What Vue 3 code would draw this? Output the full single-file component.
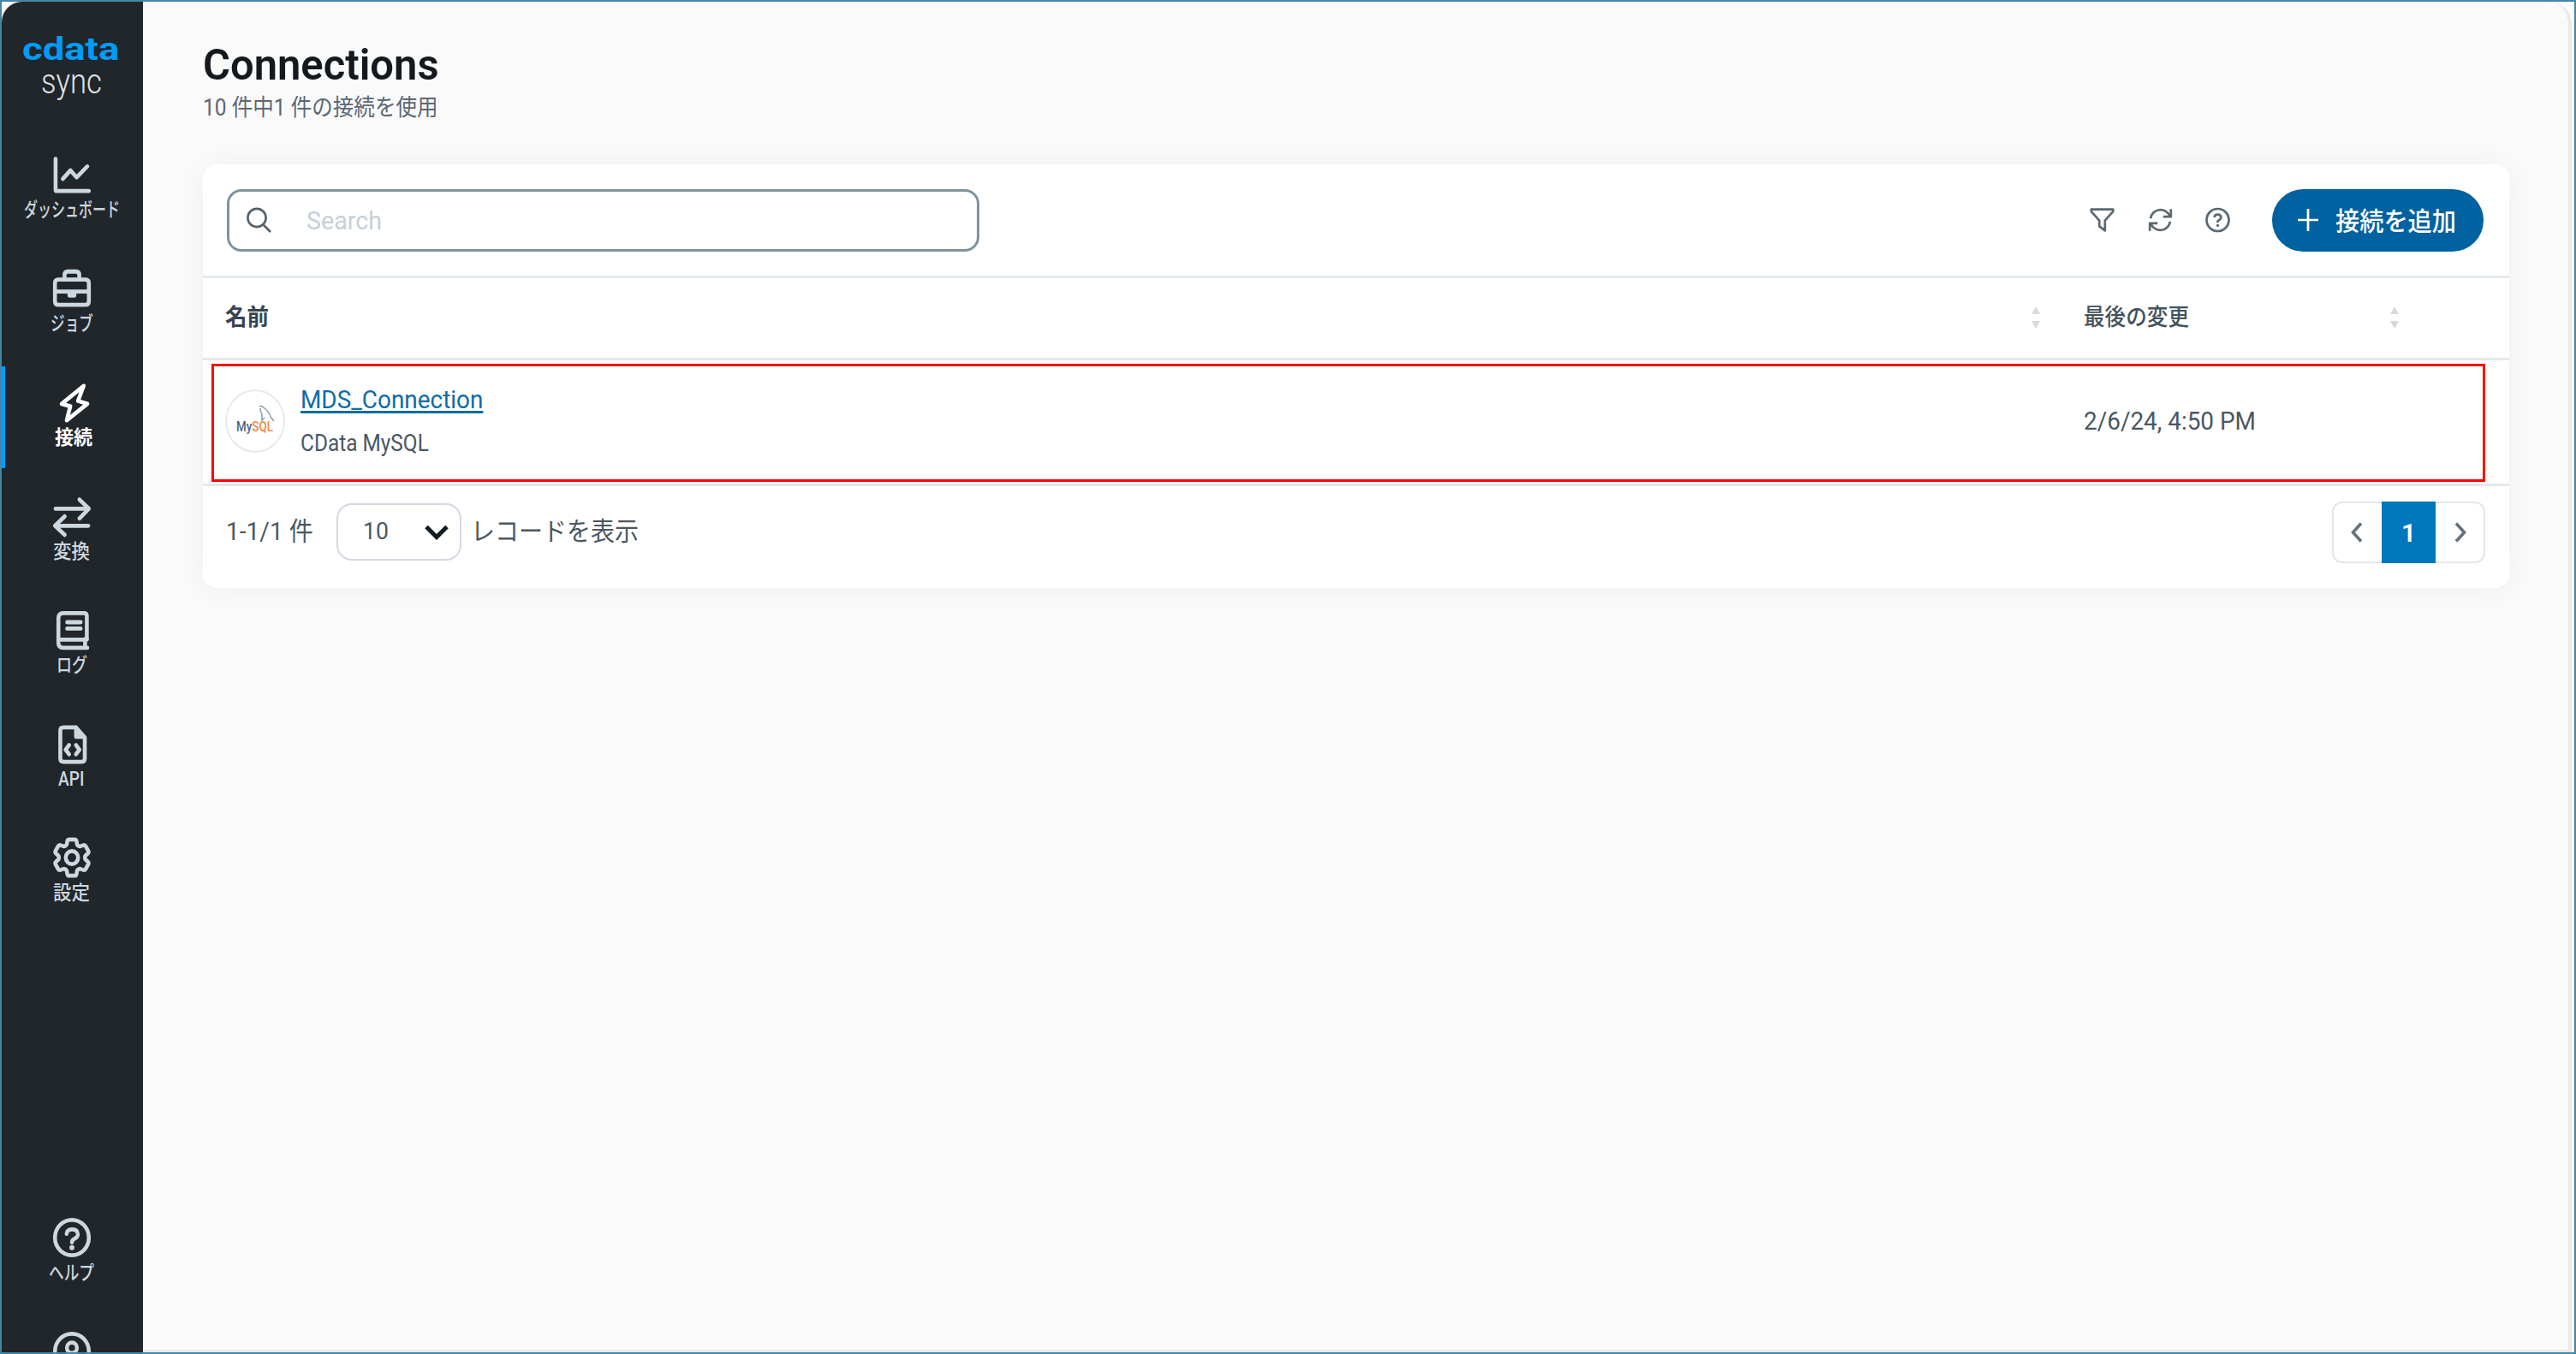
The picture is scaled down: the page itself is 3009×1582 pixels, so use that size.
<template>
  <div class="app">
    <aside class="sidebar">
      <div class="logo">
        <span v-fit="113" class="logo-name">cdata</span>
        <span v-fit="71" class="logo-product">sync</span>
      </div>
      <nav class="nav">
        <a
          v-for="item in mainItems"
          :key="item.label"
          class="nav-item"
          :class="{ 'active': item.active }"
        >
          <svg class="nav-icon" viewBox="0 0 24 24" preserveAspectRatio="none">
            <path v-for="d in item.strokes" :key="d" :d="d" :transform="item.transform" :stroke-width="item.strokeWidth || 2.5" />
            <path v-if="item.fill" class="solid" :d="item.fill" />
          </svg>
          <span v-fit="item.width" class="nav-label">{{ item.label }}</span>
        </a>
      </nav>
      <nav class="nav nav-bottom">
        <a v-for="item in bottomItems" :key="item.label" class="nav-item">
          <svg class="nav-icon" viewBox="0 0 24 24" preserveAspectRatio="none">
            <circle cx="12" cy="12" r="10.8" stroke-width="2.5" />
            <path v-for="d in item.strokes" :key="d" :d="d" stroke-width="2.4" />
            <circle v-if="item.dot" class="solid" cx="12" cy="18.1" r="1.6" />
          </svg>
          <span v-if="item.width" v-fit="item.width" class="nav-label">{{ item.label }}</span>
        </a>
      </nav>
    </aside>

    <main class="main">
      <h1 class="title"><span v-fit="276">Connections</span></h1>
      <p class="subtitle"><span v-fit="275">10 件中1 件の接続を使用</span></p>

      <section class="card">
        <div class="toolbar">
          <div class="search">
            <svg class="search-icon" viewBox="0 0 29 30">
              <circle cx="12" cy="12.5" r="10.6" />
              <path d="M19.5 20.5L28 29" />
            </svg>
            <span v-fit="88">Search</span>
          </div>
          <div class="actions">
            <svg class="action-icon" viewBox="0 0 29 30">
              <path d="M1.8 2.6H27.2V5.2L17.8 15.6V27.4L11.2 22.4V15.6L1.8 5.2Z" />
            </svg>
            <svg class="action-icon" viewBox="0 0 29 30">
              <path d="M3 13.2A11.8 11.8 0 0 1 25.4 10M26.8 2.2V11.2H17.8" />
              <path d="M26 16.8A11.8 11.8 0 0 1 3.6 20M2.2 27.8V18.8H11.2" />
            </svg>
            <svg class="action-icon" viewBox="0 0 29 30">
              <circle cx="14.5" cy="15" r="13" />
              <path d="M10.6 12Q10.8 8.6 14.5 8.6T18.4 12Q18.4 13.8 16.2 15T14.5 18" />
              <circle class="solid" cx="14.5" cy="21.4" r="1.7" />
            </svg>
          </div>
          <button class="add-button">
            <svg class="plus-icon" viewBox="0 0 24 26">
              <path d="M12 0V26M0 13H24" />
            </svg>
            <span v-fit="141">接続を追加</span>
          </button>
        </div>

        <div class="row head-row">
          <div class="cell">
            <span v-fit="51" class="name-head">名前</span>
            <svg class="sort-icon" viewBox="0 0 10 26"><path d="M5 0L10 9H0ZM5 26L0 17H10Z" /></svg>
          </div>
          <div class="cell">
            <span v-fit="123">最後の変更</span>
            <svg class="sort-icon" viewBox="0 0 10 26"><path d="M5 0L10 9H0ZM5 26L0 17H10Z" /></svg>
          </div>
        </div>

        <div v-for="connection in connections" :key="connection.name" class="row data-row">
          <div class="cell">
            <div class="avatar">
              <svg viewBox="0 0 70 74">
                <path d="M40 20Q42 18 46 22Q52 27 53 32L57 37M41 22Q41 26 43 29L43 36L46 33" />
                <text x="13" y="49" textLength="43" lengthAdjust="spacingAndGlyphs">My<tspan>SQL</tspan></text>
              </svg>
            </div>
            <div class="connection">
              <a v-fit="213" class="connection-name">{{ connection.name }}</a>
              <span v-fit="150" class="connection-type">{{ connection.type }}</span>
            </div>
          </div>
          <div class="cell">
            <span v-fit="201" class="modified">{{ connection.modified }}</span>
          </div>
          <div class="highlight"></div>
        </div>

        <div class="footer">
          <span v-fit="102" class="range">1-1/1 件</span>
          <div class="page-size">
            <span v-fit="30">10</span>
            <svg class="select-arrow" viewBox="0 0 28 18"><path d="M2 2.5L14 14.5L26 2.5" /></svg>
          </div>
          <span v-fit="196" class="records">レコードを表示</span>
          <div class="pagination">
            <button class="page-button">
              <svg viewBox="0 0 14 24"><path d="M12 1.5L2.5 12L12 22.5" /></svg>
            </button>
            <button class="page-button current">1</button>
            <button class="page-button">
              <svg viewBox="0 0 14 24"><path d="M2 1.5L11.5 12L2 22.5" /></svg>
            </button>
          </div>
        </div>
      </section>
    </main>
  </div>
</template>

<script setup>
import { ref } from 'vue';

// Condenses a label to the given width and keeps its layout box in step
const vFit = {
  mounted(el, { value }) {
    const natural = el.offsetWidth;
    el.style.transform = `scaleX(${value / natural})`;
    el.style.marginRight = `${value - natural}px`;
  }
};

const gear = 'M9.594 3.94c.09-.542.56-.94 1.11-.94h2.593c.55 0 1.02.398 1.11.94l.213 1.281c.063.374.313.686.645.87.074.04.147.083.22.127.325.196.72.257 1.075.124l1.217-.456a1.125 1.125 0 0 1 1.37.49l1.296 2.247a1.125 1.125 0 0 1-.26 1.431l-1.003.827c-.293.241-.438.613-.43.992a7.723 7.723 0 0 1 0 .255c-.008.378.137.75.43.991l1.004.827c.424.35.534.955.26 1.43l-1.298 2.247a1.125 1.125 0 0 1-1.369.491l-1.217-.456c-.355-.133-.75-.072-1.076.124a6.47 6.47 0 0 1-.22.128c-.331.183-.581.495-.644.869l-.213 1.281c-.09.543-.56.94-1.11.94h-2.594c-.55 0-1.019-.398-1.11-.94l-.213-1.281c-.062-.374-.312-.686-.644-.87a6.52 6.52 0 0 1-.22-.127c-.325-.196-.72-.257-1.076-.124l-1.217.456a1.125 1.125 0 0 1-1.369-.49l-1.297-2.247a1.125 1.125 0 0 1 .26-1.431l1.004-.827c.292-.24.437-.613.43-.991a6.932 6.932 0 0 1 0-.255c.007-.38-.138-.751-.43-.992l-1.004-.827a1.125 1.125 0 0 1-.26-1.43l1.297-2.247a1.125 1.125 0 0 1 1.37-.491l1.216.456c.356.133.751.072 1.076-.124.072-.044.146-.086.22-.128.332-.183.582-.495.644-.869l.214-1.28Z';

const mainItems = ref([
  {
    label: 'ダッシュボード',
    width: 112,
    strokes: ['M1.6 2.4V21.2Q1.6 22 2.4 22H22.8', 'M6.2 14.6L11.1 9.4L15 13.7L21.8 7']
  },
  {
    label: 'ジョブ',
    width: 50,
    strokes: ['M3.4 6.6H20.6Q22.8 6.6 22.8 8.8V19.8Q22.8 22 20.6 22H3.4Q1.2 22 1.2 19.8V8.8Q1.2 6.6 3.4 6.6Z', 'M7.3 6.4V4Q7.3 1.7 9.3 1.7H14.7Q16.7 1.7 16.7 4V6.4', 'M1.4 13.9H22.6'],
    fill: 'M9.2 14H14.8V16.2Q14.8 17.6 13.4 17.6H10.6Q9.2 17.6 9.2 16.2Z'
  },
  {
    label: '接続',
    width: 44,
    active: true,
    strokes: ['M18.4 2L4.4 13L9.9 14.4L7.6 23L20.8 12.9L14.8 11.2Z']
  },
  {
    label: '変換',
    width: 43,
    strokes: ['M1.6 7.5H22.4', 'M16.8 1.9L22.8 7.5L16.8 13.4', 'M22.4 17.9H1.6', 'M7.4 12.2L1.2 17.9L7.4 23.4']
  },
  {
    label: 'ログ',
    width: 36,
    strokes: ['M21.5 17.5V3.5Q21.5 1.8 19.8 1.8H6.5Q3.4 1.8 3.4 5V20Q3.4 22.9 6.5 22.9H21.8', 'M5 17.9H21.5', 'M20.4 17.6V22.8', 'M9 7.3H17.6', 'M9 11.2H17.6']
  },
  {
    label: 'API',
    width: 30,
    strokes: ['M14.6 2H6.6Q4.6 2 4.6 4V21Q4.6 23 6.6 23H18.2Q20.2 23 20.2 21V8.2L14.6 2', 'M10.2 12.8L8 15.6L10.2 18.4', 'M14.6 12.8L16.8 15.6L14.6 18.4'],
    fill: 'M13.4 1.6H15L21 8.4V9H14.6Q13.4 9 13.4 7.8Z'
  },
  {
    label: '設定',
    width: 43,
    transform: 'translate(-2.76 -2.76) scale(1.23)',
    strokeWidth: 2,
    strokes: [gear, 'M15.2 12A3.2 3.2 0 1 1 8.8 12A3.2 3.2 0 1 1 15.2 12Z']
  }
]);

const bottomItems = ref([
  {
    label: 'ヘルプ',
    width: 53,
    dot: true,
    strokes: ['M8.6 9.8Q8.8 7 12.2 7T15.8 10Q15.8 11.6 13.8 12.6T12 15']
  },
  {
    label: 'account',
    strokes: ['M15.2 9.8A3.2 3.2 0 1 1 8.8 9.8A3.2 3.2 0 1 1 15.2 9.8Z']
  }
]);

const connections = ref([
  { name: 'MDS_Connection', type: 'CData MySQL', modified: '2/6/24, 4:50 PM' }
]);
</script>

<style>
body {
  background-color: #fcfcfc;
}
</style>

<style scoped>
.app {
  box-sizing: border-box;
  display: flex;
  width: 3009px;
  height: 1582px;
  border: 2px solid #4586a3;
  background-color: #fcfcfc;
  font-family: Roboto, "Noto Sans CJK JP", sans-serif;
  font-size: 30px;
  color: #4a5861;
  overflow: hidden;
}

.app * {
  box-sizing: border-box;
}

.app span,
.app a.connection-name {
  display: inline-block;
  flex: none;
  white-space: nowrap;
  transform-origin: left center;
}

svg {
  display: block;
  flex: none;
  fill: none;
  stroke: currentColor;
}

.solid {
  fill: currentColor;
  stroke: none;
}

/* Sidebar */
.sidebar {
  display: flex;
  flex-direction: column;
  flex: none;
  width: 165px;
  height: 1578px;
  border-radius: 24px 0 0 0;
  background-color: #21262b;
  overflow: hidden;
}

.logo {
  display: flex;
  flex: none;
  flex-direction: column;
  align-items: center;
  width: 162px;
  height: 160px;
  padding-top: 37px;
}

.logo-name {
  font-size: 37px;
  font-weight: 700;
  line-height: 38px;
  color: #009cf8;
}

.logo-product {
  font-size: 41px;
  font-weight: 300;
  line-height: 36px;
  color: #dfe3e6;
}

.nav {
  display: flex;
  flex: none;
  flex-direction: column;
  gap: 14px;
}

.nav-bottom {
  margin-top: 325px;
}

.nav-item {
  display: flex;
  flex-direction: column;
  align-items: center;
  width: 163px;
  height: 119px;
  padding-top: 19px;
  color: #cdd7df;
}

.nav-item.active {
  border-left: 4px solid #009cf8;
  color: #ffffff;
}

.nav-icon {
  width: 44px;
  height: 46px;
  overflow: visible;
  stroke-linejoin: round;
  stroke-linecap: round;
}

.nav-label {
  font-size: 23px;
  font-weight: 500;
  line-height: 37px;
}

.nav-item.active .nav-label {
  font-weight: 700;
}

/* Page */
.main {
  flex: none;
  width: 2837px;
  height: 1578px;
  padding: 44px 69px 0 70px;
  border-right: 4px solid #e8e9e9;
  border-bottom: 3px solid #e4ebed;
  border-radius: 0 26px 0 0;
  background-color: #fafafa;
}

.title {
  margin: 0;
  font-size: 50px;
  font-weight: 600;
  line-height: 60px;
  color: #14191f;
}

.subtitle {
  margin: 2px 0 0;
  font-size: 27.5px;
  line-height: 36px;
  color: #5b6875;
}

.card {
  width: 2694px;
  height: 495px;
  margin-top: 48px;
  border-radius: 16px;
  background-color: #ffffff;
  box-shadow: 0 2px 36px rgba(0, 0, 0, 0.05);
}

.toolbar {
  display: flex;
  align-items: center;
  height: 133px;
  padding: 0 30px 0 28px;
  border-bottom: 3px solid #e4e9ee;
}

.search {
  display: flex;
  align-items: center;
  gap: 41px;
  width: 879px;
  height: 73px;
  padding-left: 20px;
  border: 3px solid #7f929d;
  border-radius: 17px;
  color: #c6cfd9;
}

.search-icon {
  width: 29px;
  height: 30px;
  color: #55626b;
  stroke-width: 2.6;
}

.actions {
  display: flex;
  gap: 38.5px;
  margin-left: auto;
  margin-right: 49px;
}

.action-icon {
  width: 29px;
  height: 30px;
  color: #5a6871;
  stroke-width: 2.7;
  stroke-linejoin: round;
}

.add-button {
  display: flex;
  align-items: center;
  gap: 20px;
  width: 247px;
  height: 73px;
  padding: 0 0 0 30px;
  border: none;
  border-radius: 37px;
  background-color: #0062a0;
  color: #ffffff;
  font-family: inherit;
  font-size: 30px;
  font-weight: 500;
}

.add-button span {
  padding-bottom: 3px;
}

.plus-icon {
  width: 24px;
  height: 26px;
  stroke-width: 2.7;
}

.row {
  position: relative;
  display: grid;
  grid-template-columns: 2171px 419px 1fr;
  border-bottom: 3px solid #e4e9ec;
}

.cell {
  display: flex;
  align-items: center;
  padding: 0 25px 0 26px;
}

.head-row {
  height: 96px;
  font-size: 27px;
  font-weight: 500;
  color: #44525c;
}

.head-row .cell {
  padding-bottom: 2px;
}

.head-row .cell span {
  padding-bottom: 5px;
}

.head-row .name-head {
  font-weight: 700;
  color: #37454f;
}

.sort-icon {
  width: 10px;
  height: 26px;
  margin-left: auto;
  fill: #d5dade;
  stroke: none;
}

.data-row {
  height: 147px;
}

.data-row .cell {
  padding-bottom: 2px;
}

.modified {
  padding-bottom: 2px;
}

.avatar {
  width: 70px;
  height: 74px;
  border-radius: 50%;
  box-shadow: inset 0 0 0 2px #e5eaee;
}

.avatar svg {
  width: 70px;
  height: 74px;
  color: #8fa0b0;
  stroke-width: 1.6;
}

.avatar text {
  font-size: 16px;
  font-weight: 500;
  fill: #4c6680;
  stroke: none;
}

.avatar tspan {
  fill: #f08a3c;
}

.connection {
  display: flex;
  flex-direction: column;
  align-items: flex-start;
  margin-left: 18px;
  line-height: 51px;
}

.connection-name {
  color: #0f6ba8;
  text-decoration: underline;
  text-decoration-thickness: 3px;
  text-underline-offset: 3px;
  text-decoration-skip-ink: none;
}

.connection-type {
  font-size: 27.5px;
}

.highlight {
  position: absolute;
  top: 4px;
  left: 10px;
  width: 2656px;
  height: 138px;
  border: 3px solid #ff0000;
}

.footer {
  display: flex;
  align-items: center;
  height: 72px;
  margin-top: 18px;
  padding: 0 28px 0 27px;
}

.range,
.records {
  padding-bottom: 9px;
}

.page-size {
  display: flex;
  align-items: center;
  justify-content: space-between;
  width: 146px;
  height: 67px;
  margin: 0 11px 1px 27px;
  padding: 0 13px 0 29px;
  border: 2px solid #d2d9e2;
  border-radius: 18px;
  font-size: 27.5px;
}

.page-size span {
  padding-bottom: 2px;
}

.select-arrow {
  width: 28px;
  height: 18px;
  color: #111b22;
  stroke-width: 5;
}

.pagination {
  display: flex;
  width: 179px;
  height: 72px;
  margin-left: auto;
  border-radius: 12px;
  box-shadow: inset 0 0 0 2px #e2e7ec;
}

.page-button {
  display: flex;
  align-items: center;
  justify-content: center;
  width: 58px;
  padding: 0;
  border: none;
  background: none;
  color: #66727b;
  font-family: inherit;
  font-size: 30px;
}

.page-button svg {
  width: 14px;
  height: 24px;
  stroke-width: 3.6;
}

.page-button.current {
  width: 63px;
  background-color: #0077bd;
  color: #ffffff;
  font-weight: 600;
}
</style>
